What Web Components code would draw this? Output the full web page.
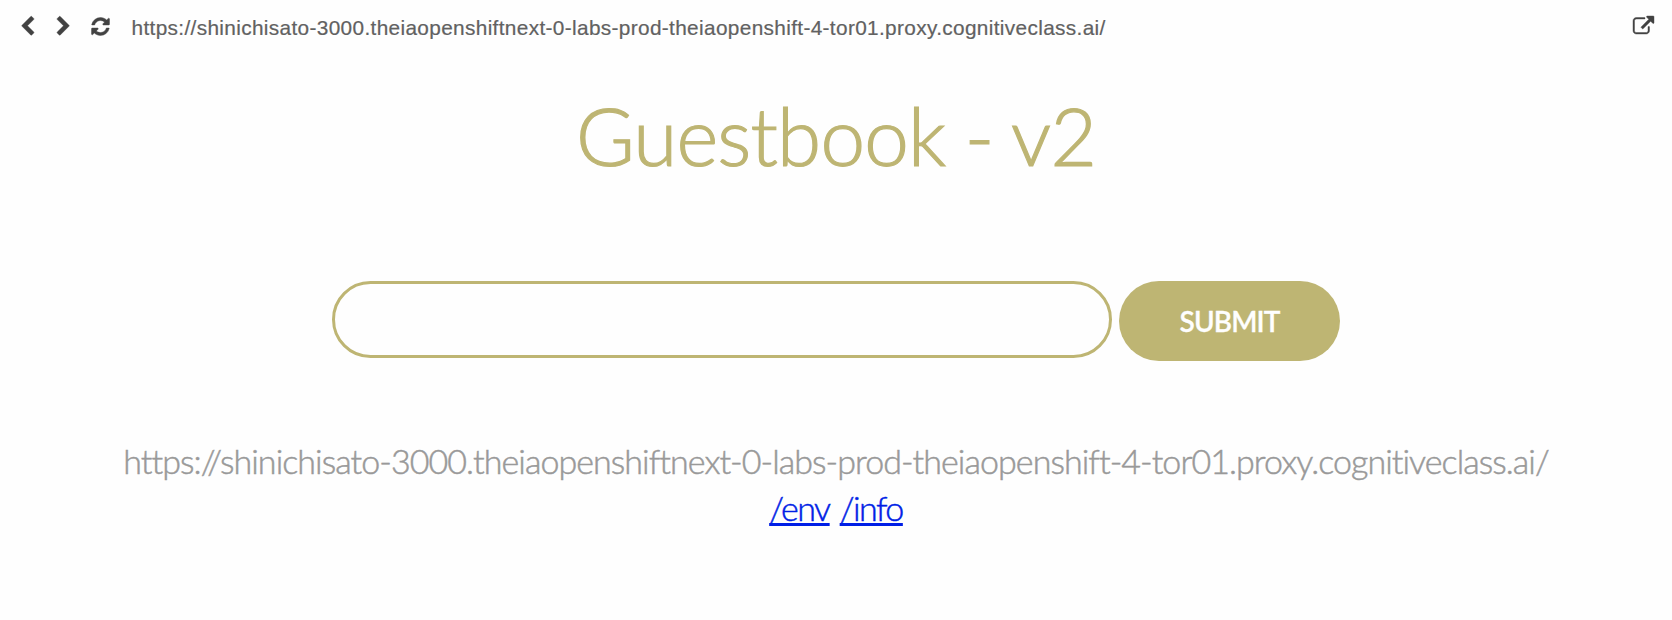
<!DOCTYPE html>
<html lang="en">
<head>
<meta charset="utf-8">
<title>Guestbook - v2</title>
<style>
  html, body { margin: 0; height: 100%; }
  body { background: #fefefe; overflow: hidden; }
</style>
</head>
<body>
<preview-window></preview-window>
<script>
const ICONS = {
  back: 'M1427 301l-531 531 531 531q19 19 19 45t-19 45l-166 166q-19 19-45 19t-45-19l-742-742q-19-19-19-45t19-45l742-742q19-19 45-19t45 19l166 166q19 19 19 45t-19 45z',
  forward: 'M1363 877l-742 742q-19 19-45 19t-45-19l-166-166q-19-19-19-45t19-45l531-531-531-531q-19-19-19-45t19-45l166-166q19-19 45-19t45 19l742 742q19 19 19 45t-19 45z',
  refresh: 'M1639 1056q0 5-1 7-64 268-268 434.5t-478 166.5q-146 0-282.5-55t-243.5-157l-129 129q-19 19-45 19t-45-19-19-45v-448q0-26 19-45t45-19h448q26 0 45 19t19 45-19 45l-137 137q71 66 161 102t187 36q134 0 250-65t186-179q11-17 53-117 8-23 30-23h192q13 0 22.5 9.5t9.5 22.5zm25-800v448q0 26-19 45t-45 19h-448q-26 0-45-19t-19-45 19-45l138-138q-148-137-349-137-134 0-250 65t-186 179q-11 17-53 117-8 23-30 23h-199q-13 0-22.5-9.5t-9.5-22.5v-7q65-268 270-434.5t480-166.5q146 0 284 55.5t245 156.5l130-129q19-19 45-19t45 19 19 45z',
  external: 'M1408 928v320q0 119-84.5 203.5t-203.5 84.5h-832q-119 0-203.5-84.5t-84.5-203.5v-832q0-119 84.5-203.5t203.5-84.5h704q14 0 23 9t9 23v64q0 14-9 23t-23 9h-704q-66 0-113 47t-47 113v832q0 66 47 113t113 47h832q66 0 113-47t47-113v-320q0-14 9-23t23-9h64q14 0 23 9t9 23zm384-864v512q0 26-19 45t-45 19-45-19l-176-176-652 652q-10 10-23 10t-23-10l-114-114q-10-10-10-23t10-23l652-652-176-176q-19-19-19-45t19-45 45-19h512q26 0 45 19t19 45z'
};

class ToolIcon extends HTMLElement {
  connectedCallback() {
    this.attachShadow({ mode: 'open' }).innerHTML = `
      <style>
        :host { display: block; width: 21px; height: 21px; flex: none; }
        svg { display: block; width: 100%; height: 100%; fill: #424242; overflow: visible;
          stroke: #424242; stroke-width: 36; stroke-linejoin: round; }
      </style>
      <svg viewBox="0 0 1792 1792"><path d="${ICONS[this.getAttribute('name')]}"/></svg>`;
  }
}
customElements.define('tool-icon', ToolIcon);

class AddressBar extends HTMLElement {
  connectedCallback() {
    this.attachShadow({ mode: 'open' }).innerHTML = `
      <style>
        :host { display: flex; align-items: flex-start; box-sizing: border-box; height: 56px; padding: 16.4px 18px 0 17px; }
        .forward { margin-left: 15px; }
        .refresh { margin-left: 15.5px; }
        .url { flex: 1; margin: -0.4px 0 0 21px; white-space: nowrap; color: #616161;
          font: 20.8px/24px "Liberation Sans", Arial, sans-serif; letter-spacing: 0.345px;
          -webkit-text-stroke: 0.2px #616161; }
      </style>
      <tool-icon name="back"></tool-icon>
      <tool-icon class="forward" name="forward"></tool-icon>
      <tool-icon class="refresh" name="refresh"></tool-icon>
      <div class="url"><slot></slot></div>
      <tool-icon name="external"></tool-icon>`;
  }
}
customElements.define('address-bar', AddressBar);

class PageTitle extends HTMLElement {
  connectedCallback() {
    this.attachShadow({ mode: 'open' }).innerHTML = `
      <style>
        :host { display: block; }
        h1 { margin: 0; text-align: center; white-space: nowrap; color: #beb573;
          font: 300 80px/96px Lato, "Gill Sans", sans-serif; letter-spacing: -0.8px; word-spacing: -1.5px;
          -webkit-text-stroke: 1.2px #beb573; }
      </style>
      <h1><slot></slot></h1>`;
  }
}
customElements.define('page-title', PageTitle);

class EntryForm extends HTMLElement {
  connectedCallback() {
    this.attachShadow({ mode: 'open' }).innerHTML = `
      <style>
        :host { display: block; }
        form { display: flex; justify-content: center; align-items: flex-start; gap: 7px; margin: 0; }
        input { box-sizing: border-box; width: 780px; height: 77px; margin: 0; padding: 0 36px;
          border: 3px solid #beb573; border-radius: 40px; background: transparent; outline: none;
          font: 300 34px Lato, sans-serif; }
        button { box-sizing: border-box; width: 221px; height: 80px; margin: 0; padding: 0; border: 0;
          border-radius: 40px; background: #beb573; color: #fefefe;
          font: 600 28px/34px Lato, "Gill Sans", sans-serif; letter-spacing: -0.9px;
          -webkit-text-stroke: 0.3px #fefefe; }
      </style>
      <form>
        <input type="text" autocomplete="off">
        <button type="button"><slot></slot></button>
      </form>`;
  }
}
customElements.define('entry-form', EntryForm);

class HostInfo extends HTMLElement {
  connectedCallback() {
    this.attachShadow({ mode: 'open' }).innerHTML = `
      <style>
        :host { display: block; text-align: center; white-space: nowrap;
          font: 300 34px/47px Lato, "Gill Sans", sans-serif; color: #999; }
        p { margin: 0; }
        .address { letter-spacing: -0.94px; -webkit-text-stroke: 0.5px #999; }
        .links { display: flex; justify-content: center; gap: 10px; letter-spacing: -1.5px; }
        a { color: #001ee6; text-decoration: underline; text-decoration-thickness: 3px;
          text-underline-offset: 2px; text-decoration-skip-ink: none; -webkit-text-stroke: 0.5px #001ee6; }
      </style>
      <p class="address"><slot></slot></p>
      <p class="links"><a href="#env">/env</a><a href="#info">/info</a></p>`;
  }
}
customElements.define('host-info', HostInfo);

class PreviewWindow extends HTMLElement {
  connectedCallback() {
    this.attachShadow({ mode: 'open' }).innerHTML = `
      <style>
        :host { display: flex; flex-direction: column; height: 620px; }
        page-title { margin-top: 31px; }
        entry-form { margin-top: 98px; }
        host-info { margin-top: 76px; }
      </style>
      <address-bar>https://shinichisato-3000.theiaopenshiftnext-0-labs-prod-theiaopenshift-4-tor01.proxy.cognitiveclass.ai/</address-bar>
      <page-title>Guestbook - v2</page-title>
      <entry-form>SUBMIT</entry-form>
      <host-info>https://shinichisato-3000.theiaopenshiftnext-0-labs-prod-theiaopenshift-4-tor01.proxy.cognitiveclass.ai/</host-info>`;
  }
}
customElements.define('preview-window', PreviewWindow);
</script>
</body>
</html>
